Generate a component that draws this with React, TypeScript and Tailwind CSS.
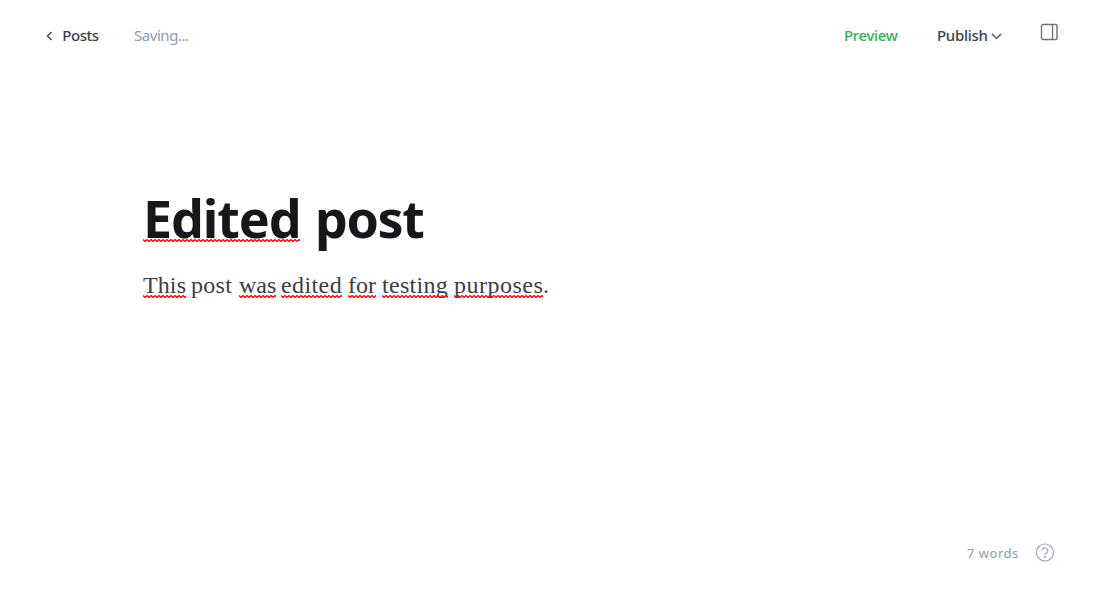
import { ReactNode } from "react";

const wave = "M0 .5" + "l2 2l2-2".repeat(45);

function Misspelled({ children, className = "", waveClass = "bottom-0" }: { children: ReactNode; className?: string; waveClass?: string }) {
  return (
    <span className={`relative inline-block ${className}`}>
      {children}
      <svg className={`absolute left-0 h-[3px] w-full overflow-hidden ${waveClass}`} fill="none" stroke="#ff0000" strokeWidth="1.25" aria-hidden="true">
        <path d={wave} />
      </svg>
    </span>
  );
}

export default function App() {
  return (
    <div className="flex h-[604px] w-[1100px] flex-col overflow-hidden bg-white font-['Noto_Sans',sans-serif]">
      <header className="flex h-[70px] shrink-0 items-center pr-[41px] pl-[45px] text-[15px] text-[#394047]">
        <button className="flex items-center font-medium">
          <svg className="mt-[2px] mr-[9px] h-[10px] w-2" viewBox="0 0 8 10" fill="none" stroke="#394047" strokeWidth="1.4">
            <path d="M6.5 1 2.5 5l4 4" />
          </svg>
          <span className="w-[37px] whitespace-nowrap tracking-[-0.45px]">Posts</span>
        </button>
        <span className="ml-[35px] whitespace-nowrap tracking-[-0.45px] text-[#8e9cac]">Saving...</span>
        <div className="ml-auto flex items-center font-medium">
          <button className="w-[54px] whitespace-nowrap text-left tracking-[-0.35px] text-[#30b24a]">Preview</button>
          <button className="ml-[39px] flex items-center">
            <span className="w-[51px] whitespace-nowrap text-left tracking-[-0.3px]">Publish</span>
            <svg className="ml-[3px] mt-[3px] h-[7px] w-[11px]" viewBox="0 0 11 7" fill="none" stroke="#6b7278" strokeWidth="1.8">
              <path d="m1 1 4.5 4.3L10 1" />
            </svg>
          </button>
          <button className="ml-[38px] -mt-[7px] mr-px" aria-label="Settings">
            <svg className="h-[18px] w-[18px]" viewBox="0 0 18 18" fill="none" stroke="#6b7278" strokeWidth="1.4">
              <rect x="1.5" y="1.5" width="15.5" height="15" rx="1.5" />
              <path d="M12.5 1.5v15" />
            </svg>
          </button>
        </div>
      </header>

      <main className="flex flex-1 flex-col pt-[115px] pl-[143px]">
        <h1 className="flex h-[66px] text-[52px] leading-[66px] font-bold whitespace-nowrap text-[#15171a]">
          <Misspelled className="w-[157px] tracking-[-1.1px]" waveClass="bottom-[9px]">Edited</Misspelled>
          <span className="ml-[15px] tracking-[-1.4px]">post</span>
        </h1>
        <p className="mt-[18px] flex h-[29px] gap-[6px] font-['Liberation_Serif',serif] text-[24px] leading-[33px] whitespace-nowrap text-[#394047]">
          <Misspelled className="w-[43px] tracking-[0.1px]">This</Misspelled>
          <span className="-ml-px w-[42px] tracking-[0.3px]">post</span>
          <Misspelled className="w-[37px]">was</Misspelled>
          <Misspelled className="-ml-px w-[61px] tracking-[0.4px]">edited</Misspelled>
          <Misspelled className="w-[28px]">for</Misspelled>
          <Misspelled className="w-[66px] tracking-[0.3px]">testing</Misspelled>
          <span className="flex">
            <Misspelled className="w-[89px] tracking-[0.5px]">purposes</Misspelled>
            <span>.</span>
          </span>
        </p>
      </main>

      <footer className="flex h-[103px] shrink-0 items-center justify-end pr-[45px] text-[13px] text-[#8e9cac]">
        <span className="mt-[2px] w-[52px] whitespace-nowrap tracking-[0.5px]">7 words</span>
        <svg className="ml-[16px] h-5 w-5" viewBox="0 0 20 20" fill="none" stroke="#9aa6b4" strokeWidth="1.2">
          <circle cx="10" cy="9.5" r="8.5" />
          <path d="M7.2 7.6a2.8 2.8 0 1 1 3.8 2.6c-.7.3-1 .7-1 1.5v.2" />
          <circle cx="10" cy="14.1" r=".45" fill="#9aa6b4" />
        </svg>
      </footer>
    </div>
  );
}
